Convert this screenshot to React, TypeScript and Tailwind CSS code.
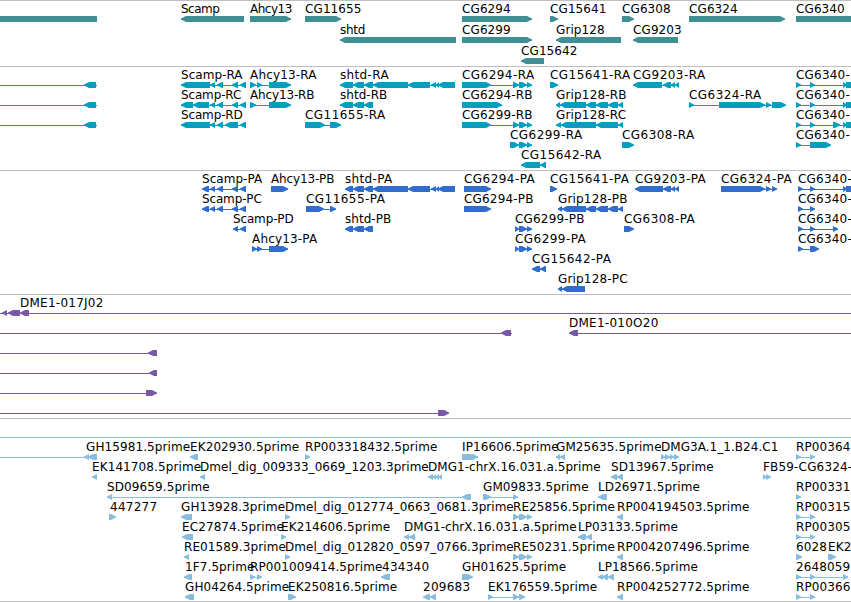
import React from 'react'

type Dir = '<' | '>'

interface Feature {
  name?: string
  labelX?: number
  dir: Dir
  exons: [number, number][]
  // intron line, when it reaches past the outer exons
  line?: [number, number]
}

interface Track {
  id: string
  color: string
  height: string
  rowHeight: string
  rows: Feature[][]
}

const WIDTH = 851

const f = (
  name: string,
  dir: Dir,
  exons: [number, number][],
  labelX?: number,
  line?: [number, number]
): Feature => ({ name, dir, exons, labelX, line })

const scampTail: [number, number][] = [[210, 215], [217, 223], [232, 238], [240, 246]]
const shtdTail: [number, number][] = [[353, 364], [364, 373], [373, 408], [408, 430], [431, 436], [436, 439], [438, 455]]
const gripTail: [number, number][] = [[586, 596], [596, 608], [608, 618], [618, 623]]
const cg6299Tail: [number, number][] = [[519, 527], [527, 532]]
const cg9203Tail: [number, number][] = [[663, 671], [671, 675], [675, 679]]
const clipped = f('', '<', [[84, 96]], 0, [0, 97])

const tracks: Track[] = [
  {
    id: 'genes',
    color: 'text-[#3f8f94]',
    height: 'h-[66px]',
    rowHeight: 'h-[21px]',
    rows: [
      [
        f('', '<', [[-20, 97]]),
        f('Scamp', '<', [[181, 244]]),
        f('Ahcy13', '>', [[250, 291]]),
        f('CG11655', '>', [[305, 341]]),
        f('CG6294', '>', [[462, 532]]),
        f('CG15641', '>', [[550, 558]]),
        f('CG6308', '>', [[622, 634]]),
        f('CG6324', '>', [[689, 785]]),
        f('CG6340', '>', [[796, 870]])
      ],
      [
        f('shtd', '<', [[340, 456]]),
        f('CG6299', '>', [[462, 532]]),
        f('Grip128', '<', [[556, 621]]),
        f('CG9203', '<', [[633, 678]])
      ],
      [f('CG15642', '<', [[521, 544]])]
    ]
  },
  {
    id: 'transcripts',
    color: 'text-[#009fbf]',
    height: 'h-[104px]',
    rowHeight: 'h-[20px]',
    rows: [
      [
        clipped,
        f('Scamp-RA', '<', [[181, 210], ...scampTail]),
        f('Ahcy13-RA', '>', [[250, 256], [257, 262], [269, 291]]),
        f('shtd-RA', '<', [[340, 353], ...shtdTail]),
        f('CG6294-RA', '>', [[462, 491], [513, 519], ...cg6299Tail]),
        f('CG15641-RA', '>', [[550, 558]]),
        f('CG9203-RA', '<', [[633, 662], ...cg9203Tail]),
        f('CG6340-', '>', [[796, 801], [810, 815], [843, 847], [846, 870]])
      ],
      [
        clipped,
        f('Scamp-RC', '<', [[181, 193], [193, 209], ...scampTail]),
        f('Ahcy13-RB', '>', [[250, 256], [269, 291]]),
        f('shtd-RB', '<', [[340, 353], [353, 364], [364, 373]]),
        f('CG6294-RB', '>', [[462, 502]]),
        f('Grip128-RB', '<', [[556, 560], [560, 586], ...gripTail]),
        f('CG6324-RA', '>', [[689, 694], [719, 765], [766, 771], [772, 786]]),
        f('CG6340-', '>', [[796, 801], [810, 815], [843, 847], [846, 870]])
      ],
      [
        clipped,
        f('Scamp-RD', '<', [[181, 210], [210, 215], [217, 223], [225, 238], [240, 246]]),
        f('CG11655-RA', '>', [[305, 325], [330, 341]]),
        f('CG6299-RB', '>', [[462, 491], [513, 519], ...cg6299Tail]),
        f('Grip128-RC', '<', [[556, 561], [561, 596], [596, 618], [618, 623]]),
        f('CG6340-', '>', [[796, 801], [810, 815], [833, 840], [843, 847], [846, 870]])
      ],
      [
        f('CG6299-RA', '>', [[510, 519], ...cg6299Tail]),
        f('CG6308-RA', '>', [[622, 634]]),
        f('CG6340-', '>', [[796, 801], [810, 831]])
      ],
      [f('CG15642-RA', '<', [[521, 540], [540, 546]])]
    ]
  },
  {
    id: 'proteins',
    color: 'text-[#306dcd]',
    height: 'h-[124px]',
    rowHeight: 'h-[20px]',
    rows: [
      [
        f('Scamp-PA', '<', [[202, 209], ...scampTail]),
        f('Ahcy13-PB', '>', [[271, 288]]),
        f('shtd-PA', '<', [[345, 353], ...shtdTail]),
        f('CG6294-PA', '>', [[464, 491]]),
        f('CG15641-PA', '>', [[550, 557]]),
        f('CG9203-PA', '<', [[635, 663], ...cg9203Tail]),
        f('CG6324-PA', '>', [[721, 765], [766, 771], [772, 777]]),
        f('CG6340-', '>', [[798, 803], [810, 815], [843, 847], [846, 870]])
      ],
      [
        f('Scamp-PC', '<', [[202, 209], ...scampTail]),
        f('CG11655-PA', '>', [[306, 324], [330, 336]]),
        f('CG6294-PB', '>', [[464, 491]]),
        f('Grip128-PB', '<', [[558, 562], [562, 586], ...gripTail]),
        f('CG6340-', '>', [[798, 803], [810, 815]])
      ],
      [
        f('Scamp-PD', '<', [[233, 238], [240, 246]]),
        f('shtd-PB', '<', [[345, 353], [353, 364], [364, 373]]),
        f('CG6299-PB', '>', [[515, 519], ...cg6299Tail]),
        f('CG6308-PA', '>', [[624, 634]]),
        f('CG6340-', '>', [[798, 803], [810, 815], [833, 838]])
      ],
      [
        f('Ahcy13-PA', '>', [[252, 257], [257, 262], [269, 288]]),
        f('CG6299-PA', '>', [[515, 519], ...cg6299Tail]),
        f('CG6340-', '>', [[798, 803], [810, 819]])
      ],
      [f('CG15642-PA', '<', [[532, 540], [540, 546]])],
      [f('Grip128-PC', '<', [[558, 562], [562, 585]])]
    ]
  },
  {
    id: 'bacs',
    color: 'text-[#7859a8]',
    height: 'h-[124px]',
    rowHeight: 'h-[20px]',
    rows: [
      [f('DME1-017J02', '<', [[2, 7], [8, 20], [20, 29]], 20, [0, WIDTH])],
      [
        f('', '<', [[501, 511]], 0, [0, 512]),
        f('DME1-010O20', '<', [[569, 578]], 569, [569, WIDTH])
      ],
      [f('', '<', [[148, 157]], 0, [0, 157])],
      [f('', '<', [[149, 157]], 0, [0, 157])],
      [f('', '>', [[146, 157]], 0, [0, 157])],
      [f('', '>', [[438, 449]], 0, [0, 449])]
    ]
  },
  {
    id: 'ests',
    color: 'text-[#88bddd]',
    height: 'h-[183px]',
    rowHeight: 'h-[20px]',
    rows: [
      [f('', '>', [], 0, [0, WIDTH])],
      [
        f('GH15981.5prime', '<', [[84, 89], [88, 97]], 86, [0, 97]),
        f('EK202930.5prime', '<', [[190, 198]]),
        f('RP003318432.5prime', '>', [[305, 310]]),
        f('IP16606.5prime', '>', [[462, 478]]),
        f('GM25635.5prime', '<', [[556, 560], [560, 565]]),
        f('DMG3A.1_1.B24.C1', '>', [[661, 665], [665, 670], [670, 674], [674, 679]]),
        f('RP00364', '>', [[796, 801], [810, 815]])
      ],
      [
        f('EK141708.5prime', '<', [[92, 97]]),
        f('Dmel_dig_009333_0669_1203.3prime', '<', [[200, 205]]),
        f('DMG1-chrX.16.031.a.5prime', '<', [[428, 433], [433, 436], [436, 439], [439, 442]]),
        f('SD13967.5prime', '<', [[611, 617], [617, 623]]),
        f('FB59-CG6324-', '>', [[763, 766], [766, 771]])
      ],
      [
        f('SD09659.5prime', '<', [[107, 112], [462, 471]]),
        f('GM09833.5prime', '>', [[483, 491], [513, 518]]),
        f('LD26971.5prime', '<', [[598, 607]]),
        f('RP00331', '>', [[796, 801]])
      ],
      [
        f('447277', '>', [[109, 116]], 110),
        f('GH13928.3prime', '<', [[181, 192]]),
        f('Dmel_dig_012774_0663_0681.3prime', '>', [[285, 290]]),
        f('RE25856.5prime', '>', [[513, 519], [519, 527], [527, 532]]),
        f('RP004194503.5prime', '<', [[617, 623]]),
        f('RP00315', '>', [[796, 801], [810, 815]])
      ],
      [
        f('EC27874.5prime', '<', [[182, 193]]),
        f('EK214606.5prime', '>', [[281, 286]]),
        f('DMG1-chrX.16.031.a.5prime', '<', [[404, 409], [409, 415]]),
        f('LP03133.5prime', '<', [[578, 586], [586, 592]]),
        f('RP00305', '>', [[796, 801], [810, 815]])
      ],
      [
        f('RE01589.3prime', '<', [[184, 189]]),
        f('Dmel_dig_012820_0597_0766.3prime', '>', [[285, 290]]),
        f('RE50231.5prime', '>', [[513, 519], [519, 527], [527, 532]]),
        f('RP004207496.5prime', '<', [[617, 623]]),
        f('6028', '>', [[796, 802]]),
        f('EK2', '>', [[828, 836]])
      ],
      [
        f('1F7.5prime', '<', [[184, 192]], 185),
        f('RP001009414.5prime', '>', [[250, 255], [257, 262]]),
        f('434340', '<', [[381, 390]], 382),
        f('GH01625.5prime', '>', [[462, 473]]),
        f('LP18566.5prime', '<', [[598, 603], [602, 608], [608, 614]]),
        f('2648059', '>', [[796, 801], [810, 815], [843, 848]])
      ],
      [
        f('GH04264.5prime', '<', [[185, 194]]),
        f('EK250816.5prime', '>', [[288, 296]]),
        f('209683', '<', [[423, 430], [430, 436]]),
        f('EK176559.5prime', '>', [[488, 493], [513, 519], [519, 525]]),
        f('RP004252772.5prime', '<', [[617, 623]]),
        f('RP00366', '>', [[796, 801], [810, 815]])
      ]
    ]
  }
]

// letter spacing per label family, first match wins
const tracking: [RegExp, string][] = [
  [/^(Scamp|Ahcy13)$/, 'tracking-[-0.5px]'],
  [/^shtd$/, 'tracking-[-0.25px]'],
  [/^CG.*-.A$/, 'tracking-[0.45px]'],
  [/^CG.*-$/, 'tracking-[0.2px]'],
  [/^shtd-.A$/, 'tracking-[0.34px]'],
  [/^(shtd-|Scamp-.A)/, 'tracking-[0.04px]'],
  [/^(Scamp-|Ahcy13-.B)/, 'tracking-[-0.15px]'],
  [/^(DME1|4|2096)/, 'tracking-[0.25px]'],
  [/^(Dmel|DMG)/, 'tracking-[0.04px]'],
  [/-/, 'tracking-[0.17px]'],
  [/./, 'tracking-[0.1px]']
]

const trackingFor = (name: string) => tracking.find(([re]) => re.test(name))?.[1] ?? ''

function exonPoints(a: number, b: number, dir: Dir) {
  const tip = Math.min(5, b - a)
  return dir === '<'
    ? `${a},2.5 ${a + tip},0 ${b},0 ${b},6 ${a + tip},6 ${a},3.5`
    : `${b},2.5 ${b - tip},0 ${a},0 ${a},6 ${b - tip},6 ${b},3.5`
}

function Row({ features, height }: { features: Feature[]; height: string }) {
  return (
    <div className={`relative flex flex-col ${height}`}>
      <div className="h-[15px] shrink-0">
        {features.map((item, i) => {
          if (!item.name) return null
          const x = item.labelX ?? item.exons[0][0]
          return (
            <span
              key={i}
              className={`absolute top-px text-xs leading-[15px] whitespace-nowrap text-black ${trackingFor(item.name)}`}
              style={{ left: x }}
            >
              {item.name}
            </span>
          )
        })}
      </div>
      <svg
        width={WIDTH}
        height={6}
        viewBox={`0 0 ${WIDTH} 6`}
        fill="currentColor"
        className="block shrink-0"
      >
        {features.map((item, i) => {
          const [start, end] = item.line ?? [
            item.exons[0][0],
            item.exons[item.exons.length - 1][1]
          ]
          return (
            <g key={i}>
              <rect x={start} y={3} width={end - start} height={1} />
              {item.exons.map(([a, b]) => (
                <polygon key={a} points={exonPoints(a, b, item.dir)} />
              ))}
            </g>
          )
        })}
      </svg>
    </div>
  )
}

export default function App() {
  return (
    <main className="flex h-[602px] w-[851px] flex-col overflow-hidden border-b border-[#bfbfbf] bg-white font-['DejaVu_Sans',sans-serif]">
      {tracks.map((track) => (
        <section
          key={track.id}
          className={`shrink-0 border-t border-[#bfbfbf] ${track.height} ${track.color}`}
        >
          {track.rows.map((features, i) => (
            <Row key={i} features={features} height={track.rowHeight} />
          ))}
        </section>
      ))}
    </main>
  )
}
